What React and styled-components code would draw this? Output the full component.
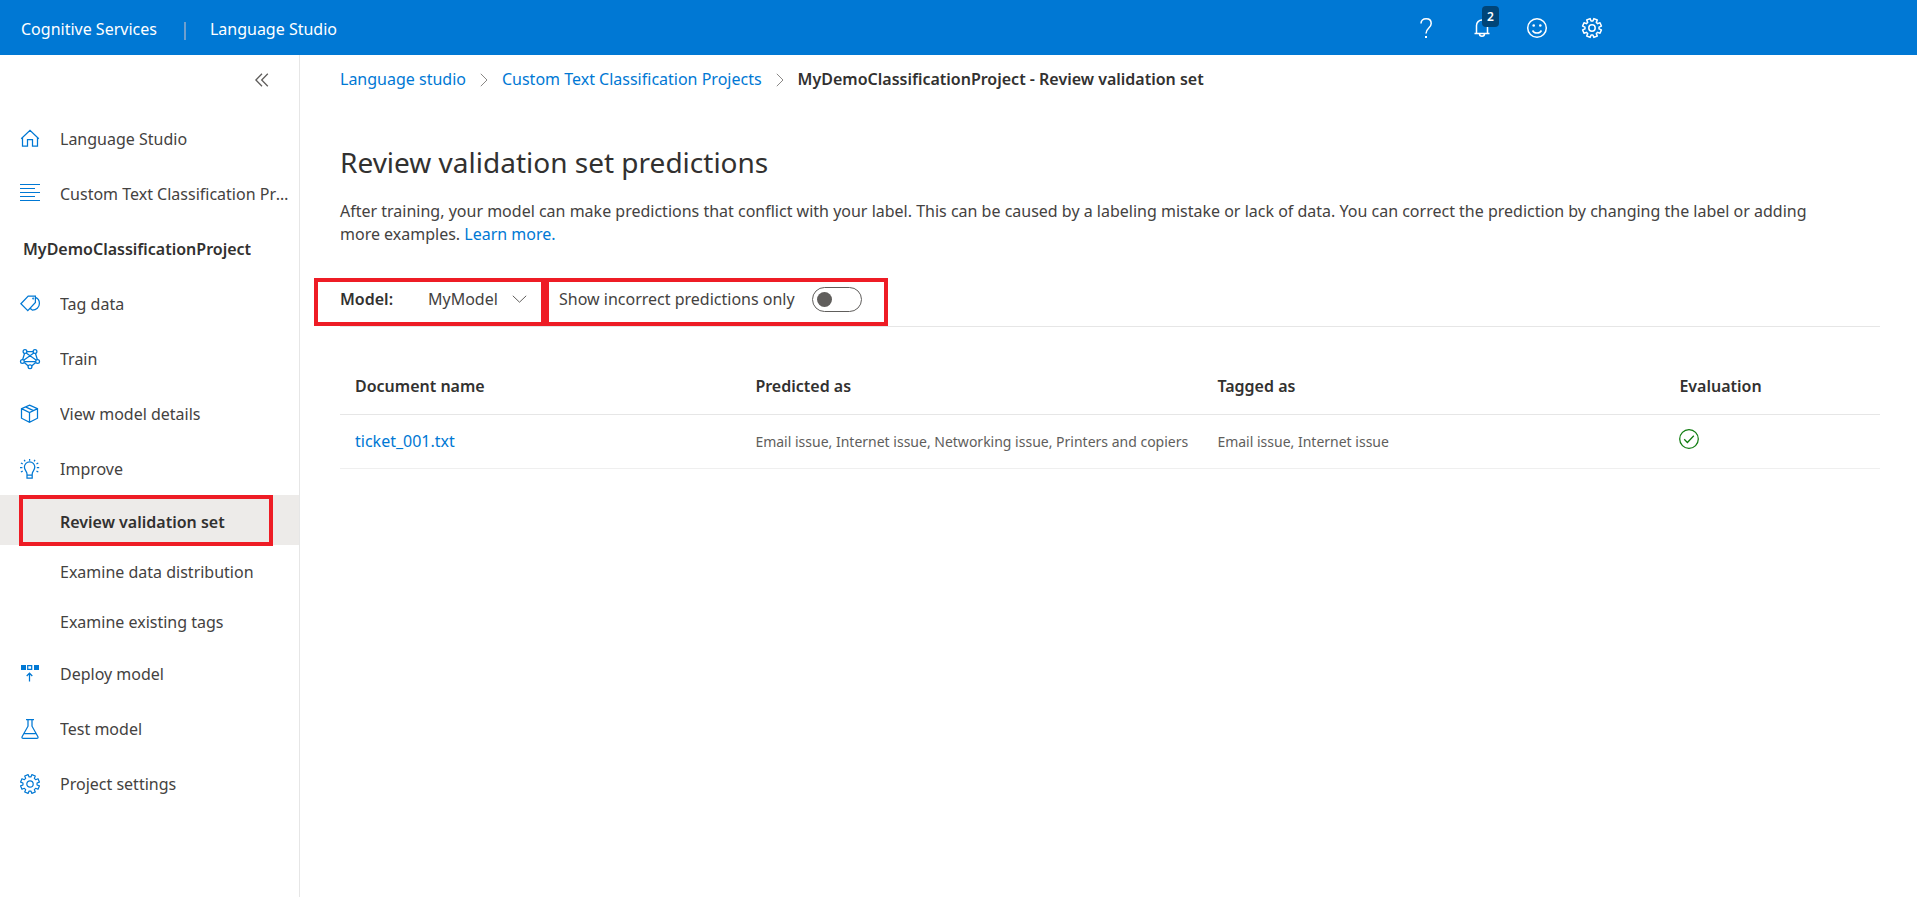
import React, { useState } from "react";
import styled, { createGlobalStyle, css } from "styled-components";

const blue = "#0078d4";
const red = "#ee1c25";

const GlobalStyle = createGlobalStyle`
  *, *::before, *::after { box-sizing: border-box; }
  body {
    margin: 0;
    background: #fff;
    color: #444241;
    font-family: "Noto Sans", "Open Sans", sans-serif;
    font-size: 16px;
    line-height: 23px;
  }
  button, select, input { font: inherit; color: inherit; }
  svg { display: block; overflow: visible; }
`;

const Page = styled.div`
  display: flex;
  flex-direction: column;
  min-height: 100vh;
`;

const TopBar = styled.header`
  display: flex;
  align-items: center;
  height: 55px;
  padding: 2px 298px 0 21px;
  background: ${blue};
  color: #fff;
`;

const BrandLink = styled.a`
  padding-top: 1px;
  color: inherit;
  text-decoration: none;
`;

const BrandDivider = styled.span`
  width: 2px;
  height: 18px;
  margin: 4px 24px 0 27px;
  background: #6f9fce;
`;

const TopActions = styled.div`
  display: flex;
  margin: 0 0 0 auto;
`;

const TopButton = styled.button`
  position: relative;
  display: grid;
  place-items: center;
  width: 55px;
  height: 54px;
  padding: 0 0 2px;
  border: 0;
  background: none;
  color: #fff;
`;

const Badge = styled.span`
  position: absolute;
  top: 4px;
  left: 28px;
  width: 17px;
  height: 21px;
  border-radius: 4px;
  background: #004578;
  font-size: 12px;
  font-weight: 600;
  line-height: 21px;
  text-align: center;
`;

const Body = styled.div`
  display: flex;
  flex: 1;
`;

const Sidebar = styled.nav`
  flex: none;
  width: 300px;
  border-right: 1px solid #e6e6e6;
`;

const CollapseRow = styled.div`
  display: flex;
  justify-content: flex-end;
  height: 55px;
  padding: 0 23px 6px 0;
`;

const CollapseButton = styled.button`
  display: grid;
  place-items: center;
  width: 28px;
  padding: 0;
  border: 0;
  background: none;
  color: #605e5c;
`;

const NavList = styled.ul`
  margin: 0;
  padding: 0;
  list-style: none;
`;

const NavLink = styled.a`
  display: flex;
  align-items: center;
  gap: 20px;
  height: ${(p) => (p.$sub ? 50 : 55)}px;
  padding: 2px 4px 0 ${(p) => (p.$sub ? 60 : 20)}px;
  color: inherit;
  text-decoration: none;
  ${(p) =>
    p.$heading &&
    css`
      padding-left: 23px;
      color: #323130;
      font-weight: 600;
    `}
  ${(p) =>
    p.$selected &&
    css`
      position: relative;
      background: #edebe9;
      color: #323130;
      font-weight: 600;
      &::after {
        content: "";
        position: absolute;
        inset: 0 26px -1px 19px;
        border: 4px solid ${red};
      }
    `}
  svg { flex: none; color: ${blue}; }
`;

const NavText = styled.span`
  overflow: hidden;
  padding-top: 2px;
  text-overflow: ellipsis;
  white-space: nowrap;
`;

const Main = styled.main`
  flex: 1;
  min-width: 0;
  padding: 13px 37px 0 40px;
`;

const Crumbs = styled.ol`
  display: flex;
  align-items: center;
  gap: 14px;
  margin: 0;
  padding: 0;
  list-style: none;
`;

const Crumb = styled.li`
  display: flex;
  align-items: center;
  gap: 14px;
  svg { color: #8a8886; }
`;

const TextLink = styled.a`
  color: ${blue};
  text-decoration: none;
`;

const CurrentCrumb = styled.span`
  color: #323130;
  font-weight: 600;
`;

const Title = styled.h1`
  margin: 51px 0 0;
  color: #323130;
  font-size: 28px;
  font-weight: 400;
  line-height: 40px;
`;

const Description = styled.p`
  margin: 18px 0 0;
  padding-right: 40px;
`;

const Toolbar = styled.div`
  display: flex;
  margin-top: 32px;
  border-bottom: 1px solid #e6e6e6;
`;

const ToolGroup = styled.div`
  display: flex;
  align-items: center;
  height: 48px;
  border: 4px solid ${red};
  padding-bottom: 6px;
`;

const ModelGroup = styled(ToolGroup)`
  width: 231px;
  margin-left: -26px;
  padding-left: 22px;
`;

const ToggleGroup = styled(ToolGroup)`
  width: 343px;
  padding-left: 10px;
`;

const ModelLabel = styled.label`
  width: 88px;
  color: #323130;
  font-weight: 600;
`;

const ToggleLabel = styled.label`
  width: 253px;
  white-space: nowrap;
`;

const SelectBox = styled.span`
  display: flex;
  align-items: center;
  svg { margin-left: -20px; color: #605e5c; pointer-events: none; }
`;

const ModelSelect = styled.select`
  appearance: none;
  width: 104px;
  padding: 0;
  border: 0;
  background: none;
`;

const Switch = styled.input`
  appearance: none;
  display: flex;
  align-items: center;
  width: 50px;
  height: 25px;
  margin: 0;
  padding: 0 4px;
  border: 1px solid #605e5c;
  border-radius: 13px;
  background: #fff;
  &::before {
    content: "";
    width: 15px;
    height: 15px;
    border-radius: 50%;
    background: #605e5c;
  }
  &:checked { justify-content: flex-end; }
`;

const Table = styled.table`
  width: 100%;
  margin-top: 32px;
  border-collapse: collapse;
  table-layout: fixed;
  text-align: left;
`;

const HeadCell = styled.th`
  width: ${(p) => p.$width};
  height: 55px;
  padding: 0 15px;
  border-bottom: 1px solid #e6e6e6;
  color: #323130;
  font-weight: 600;
`;

const Cell = styled.td`
  height: 54px;
  padding: 0 15px;
  border-bottom: 1px solid #efefef;
  white-space: nowrap;
  ${(p) => p.$small && css`color: #605e5c; font-size: 14px;`}
  ${(p) => p.$icon && css`padding-bottom: 4px; color: #107c10;`}
`;

const Icon = ({ size = 20, width = 1.25, children, ...rest }) => (
  <svg width={size} height={size} viewBox={`0 0 ${size} ${size}`} fill="none" stroke="currentColor" strokeWidth={width} aria-hidden="true" {...rest}>
    {children}
  </svg>
);

const HomeIcon = () => (
  <Icon>
    <path d="M1.2 9.8 10 1.4l8.800 8.400M2.500 8.800V17h5v-6.400h5V17h5V8.800" />
  </Icon>
);
const LinesIcon = () => (
  <Icon width={1}>
    <path d="M0 .5h20M0 4.500h15M0 8.500h20M0 12.500h15M0 16.500h20" />
  </Icon>
);
const TagIcon = () => (
  <Icon>
    <path d="M.9 9.700 8.200 2h7.200v6.500L7.800 16.600zM15.400 3.400c2.600.9 4 3.200 4 6 0 4-3.200 6.700-7 6.700L10.200 14.200" />
    <circle cx="13.200" cy="4.400" r=".4" />
  </Icon>
);
const NetworkIcon = () => (
  <Icon>
    <path d="M6.500 2.500h7M4.600 4.200 2.600 10.800M15.400 4.200l2 6.600M6.200 4 16 11M13.800 4 4 11M4.500 12.500h11M4.300 13.500l4 3.500M15.700 13.500l-4 3.500" />
    <circle cx="5" cy="2.500" r="1.900" />
    <circle cx="15" cy="2.500" r="1.900" />
    <circle cx="2.400" cy="12.500" r="1.900" />
    <circle cx="17.600" cy="12.500" r="1.900" />
    <circle cx="10" cy="17.800" r="1.900" />
  </Icon>
);
const CubeIcon = () => (
  <Icon>
    <path d="m9.500 1.200 8 3.400v9.600l-8 4.200-8-4.200V4.600zM1.500 4.600l8 3.900 8-3.900M9.500 8.500v9.900M5.500 2.900l8 3.700" />
  </Icon>
);
const BulbIcon = () => (
  <Icon>
    <path d="M7 15c0-2.800-2.600-3.600-2.600-6.900a5.200 5.200 0 0 1 10.400 0c0 3.300-2.600 4.100-2.600 6.900v4.200H7zM7 16h5.200M9.600 0v1.800M4.200.9l.9 1.500M15 .9l-.9 1.500M.9 4l1.800.9M18.300 4l-1.800.9M0 8.500h2.400M16.800 8.500h2.400M.9 13l1.800-.9M18.300 13l-1.800-.9" />
  </Icon>
);
const DeployIcon = () => (
  <Icon>
    <path d="M1 1h5v5H1zM14 1h5v5h-5z" fill="currentColor" stroke="none" />
    <path d="M7.700 1.700h4v3.600h-4zM9.500 17.500V9.500M6.700 12l2.800-2.800 2.800 2.800" />
  </Icon>
);
const FlaskIcon = () => (
  <Icon>
    <path d="M6 .6h8M8 .6v6.600L2.200 17.500c-.6 1.200-.1 1.900 1 1.900h13.600c1.100 0 1.600-.7 1-1.900L12 7.200V.6M4 14.500h12" />
  </Icon>
);

// Outline of an eight-toothed gear whose notches point up, down and sideways.
const gearPath = (() => {
  const point = (deg, r) => {
    const a = (deg * Math.PI) / 180;
    return `${(10 + r * Math.sin(a)).toFixed(2)} ${(10 - r * Math.cos(a)).toFixed(2)}`;
  };
  const points = [];
  for (let i = 0; i < 8; i += 1) {
    const mid = i * 45 + 22.5;
    points.push(point(mid - 15, 7.1), point(mid - 11, 9.6), point(mid + 11, 9.6), point(mid + 15, 7.1));
  }
  return `M${points.join("L")}Z`;
})();

const GearIcon = (props) => (
  <Icon width={1.2} {...props}>
    <path d={gearPath} strokeLinejoin="round" />
    <circle cx="10" cy="10" r="3.200" />
  </Icon>
);
const HelpIcon = () => (
  <Icon width={1.5}>
    <path d="M4 5.400C4 2.600 6 .8 9.200.8s5 1.900 5 4.700c0 4.600-5.200 4.400-5.200 10" />
    <path d="M9 18v2" strokeWidth="2" />
  </Icon>
);
const BellIcon = () => (
  <Icon width={1.5}>
    <path d="M2.500 15.500h15M4.500 15.500V7.500a5.500 5.500 0 0 1 11 0v8M7.500 15.700a2.500 2.500 0 0 0 5 0" />
  </Icon>
);
const SmileIcon = () => (
  <Icon width={1.5}>
    <circle cx="10" cy="10" r="9.300" />
    <path d="M5.500 12.500a5.200 5.200 0 0 0 9 0" />
    <circle cx="6.700" cy="7.500" r="1.300" fill="currentColor" stroke="none" />
    <circle cx="13.300" cy="7.500" r="1.300" fill="currentColor" stroke="none" />
  </Icon>
);
const CollapseIcon = () => (
  <Icon size={14} width={1.3}>
    <path d="M7 .8.9 7 7 13.200M12.800.8 6.700 7l6.100 6.200" />
  </Icon>
);
const CrumbArrow = () => (
  <svg width="8" height="14" viewBox="0 0 8 14" fill="none" stroke="currentColor" aria-hidden="true">
    <path d="m.8.8 6.200 6.200-6.200 6.200" />
  </svg>
);
const SelectArrow = () => (
  <svg width="15" height="8" viewBox="0 0 15 8" fill="none" stroke="currentColor" aria-hidden="true">
    <path d="m.8.8 6.700 6.400L14.200.8" />
  </svg>
);
const CheckIcon = () => (
  <Icon>
    <circle cx="10" cy="10" r="9.300" />
    <path d="m5.200 10.300 3.200 3.200 6.400-6.700" />
  </Icon>
);

const navItems = [
  { text: "Language Studio", icon: <HomeIcon /> },
  { text: "Custom Text Classification Projects", icon: <LinesIcon /> },
  { text: "MyDemoClassificationProject", heading: true },
  { text: "Tag data", icon: <TagIcon /> },
  { text: "Train", icon: <NetworkIcon /> },
  { text: "View model details", icon: <CubeIcon /> },
  { text: "Improve", icon: <BulbIcon /> },
  { text: "Review validation set", sub: true, selected: true },
  { text: "Examine data distribution", sub: true },
  { text: "Examine existing tags", sub: true },
  { text: "Deploy model", icon: <DeployIcon /> },
  { text: "Test model", icon: <FlaskIcon /> },
  { text: "Project settings", icon: <GearIcon /> },
];

const rows = [
  {
    name: "ticket_001.txt",
    predicted: "Email issue, Internet issue, Networking issue, Printers and copiers",
    tagged: "Email issue, Internet issue",
  },
];

export default function App() {
  const [onlyIncorrect, setOnlyIncorrect] = useState(false);
  return (
    <Page>
      <GlobalStyle />
      <TopBar>
        <BrandLink href="#services">Cognitive Services</BrandLink>
        <BrandDivider />
        <BrandLink href="#studio">Language Studio</BrandLink>
        <TopActions>
          <TopButton aria-label="Help"><HelpIcon /></TopButton>
          <TopButton aria-label="Notifications">
            <BellIcon />
            <Badge>2</Badge>
          </TopButton>
          <TopButton aria-label="Feedback"><SmileIcon /></TopButton>
          <TopButton aria-label="Settings"><GearIcon width={1.5} /></TopButton>
        </TopActions>
      </TopBar>
      <Body>
        <Sidebar>
          <CollapseRow>
            <CollapseButton aria-label="Collapse navigation"><CollapseIcon /></CollapseButton>
          </CollapseRow>
          <NavList>
            {navItems.map((item) => (
              <li key={item.text}>
                <NavLink href="#nav" $sub={item.sub} $heading={item.heading} $selected={item.selected}>
                  {item.icon}
                  <NavText>{item.text}</NavText>
                </NavLink>
              </li>
            ))}
          </NavList>
        </Sidebar>
        <Main>
          <Crumbs>
            <Crumb><TextLink href="#studio">Language studio</TextLink><CrumbArrow /></Crumb>
            <Crumb><TextLink href="#projects">Custom Text Classification Projects</TextLink><CrumbArrow /></Crumb>
            <Crumb><CurrentCrumb>MyDemoClassificationProject - Review validation set</CurrentCrumb></Crumb>
          </Crumbs>
          <Title>Review validation set predictions</Title>
          <Description>
            After training, your model can make predictions that conflict with your label. This can be caused by a
            labeling mistake or lack of data. You can correct the prediction by changing the label or adding more
            examples. <TextLink href="#learn">Learn more.</TextLink>
          </Description>
          <Toolbar>
            <ModelGroup>
              <ModelLabel htmlFor="model">Model:</ModelLabel>
              <SelectBox>
                <ModelSelect id="model"><option>MyModel</option></ModelSelect>
                <SelectArrow />
              </SelectBox>
            </ModelGroup>
            <ToggleGroup>
              <ToggleLabel htmlFor="incorrect">Show incorrect predictions only</ToggleLabel>
              <Switch
                id="incorrect"
                type="checkbox"
                role="switch"
                checked={onlyIncorrect}
                onChange={(e) => setOnlyIncorrect(e.target.checked)}
              />
            </ToggleGroup>
          </Toolbar>
          <Table>
            <thead>
              <tr>
                <HeadCell $width="26%">Document name</HeadCell>
                <HeadCell $width="30%">Predicted as</HeadCell>
                <HeadCell $width="30%">Tagged as</HeadCell>
                <HeadCell $width="14%">Evaluation</HeadCell>
              </tr>
            </thead>
            <tbody>
              {rows.map((row) => (
                <tr key={row.name}>
                  <Cell><TextLink href="#doc">{row.name}</TextLink></Cell>
                  <Cell $small>{row.predicted}</Cell>
                  <Cell $small>{row.tagged}</Cell>
                  <Cell $icon><CheckIcon /></Cell>
                </tr>
              ))}
            </tbody>
          </Table>
        </Main>
      </Body>
    </Page>
  );
}
